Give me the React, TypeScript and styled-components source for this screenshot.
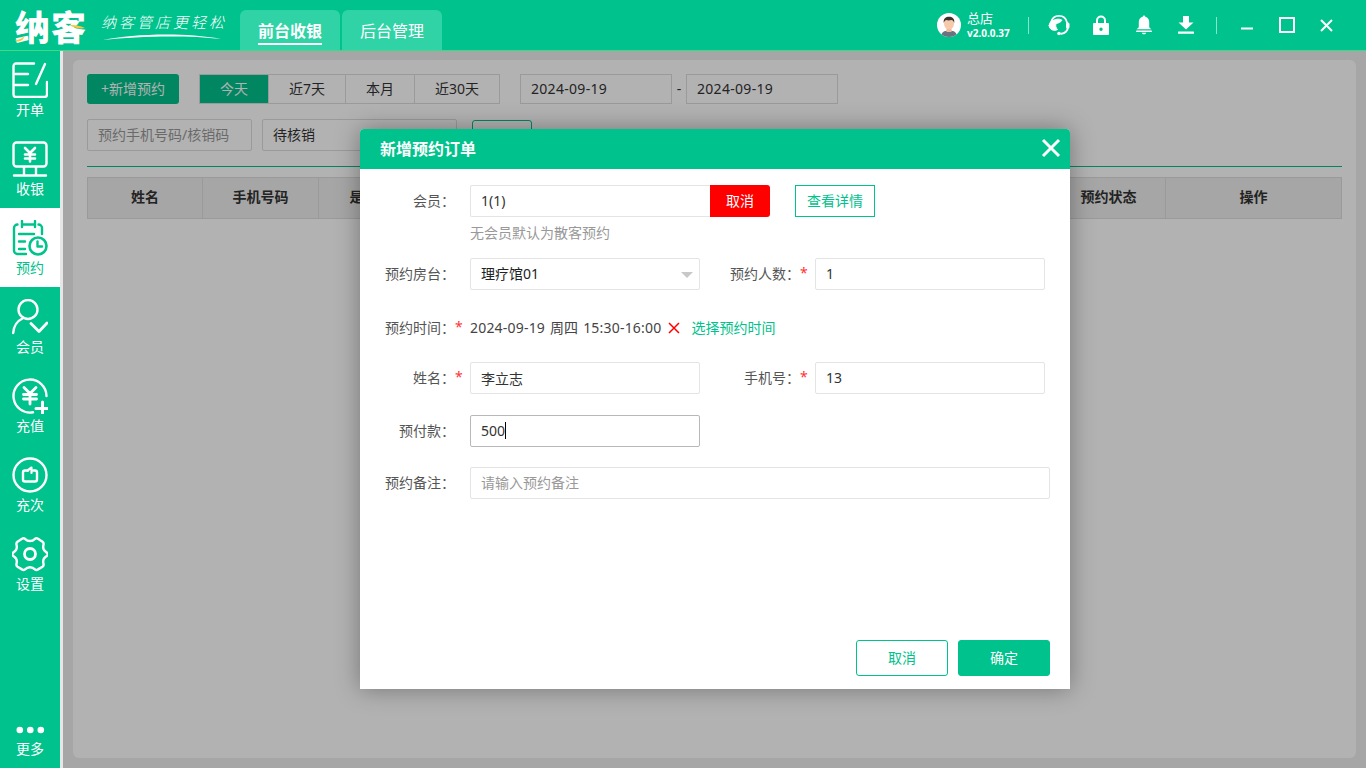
import React from "react";
import styled, { createGlobalStyle } from "styled-components";

const GREEN = "#00c28c";
const FONT = `"Noto Sans", "Noto Sans CJK SC", sans-serif`;

const Global = createGlobalStyle`
  * { box-sizing: border-box; }
  html, body { margin: 0; padding: 0; width: 1366px; height: 768px; overflow: hidden; background: #eee; font-family: ${FONT}; }
  input { font-family: ${FONT}; }
`;

const Page = styled.div`
  position: relative;
  width: 1366px;
  height: 768px;
  display: flex;
  flex-direction: column;
`;

/* ---------- top bar ---------- */
const TopBar = styled.header`
  height: 51px;
  flex: none;
  display: flex;
  align-items: flex-end;
  background: ${GREEN};
  border-bottom: 1px solid #3fd98a;
  padding-left: 15px;
  position: relative;
`;
const LogoWrap = styled.div`
  width: 225px;
  height: 50px;
  flex: none;
  display: flex;
  align-self: flex-start;
`;
const LogoText = styled.div`
  position: relative;
  width: 74px;
  padding-top: 5px;
  font: 900 35px/42px "Noto Sans CJK SC", sans-serif;
  letter-spacing: 1px;
  color: #fff;
  white-space: nowrap;
`;
const LogoAccent = styled.svg`
  position: absolute;
  left: 0;
  top: 20px;
`;
const Slogan = styled.div`
  position: relative;
  margin-left: 12px;
  padding-top: 12px;
  font: italic 300 15px/20px "Noto Sans CJK SC", sans-serif;
  letter-spacing: 3px;
  color: #fff;
  white-space: nowrap;
`;
const Swoosh = styled.svg`
  position: absolute;
  left: 2px;
  top: 33px;
`;
const TopTabs = styled.nav`
  display: flex;
  gap: 2px;
`;
const TopTab = styled.div<{ $active?: boolean }>`
  width: 100px;
  height: 40px;
  background: #30d3a6;
  border-radius: 6px 6px 0 0;
  display: flex;
  justify-content: center;
  align-items: flex-start;
  padding-top: 9px;
  color: #fff;
  font-size: 16px;
  line-height: 24px;
  font-weight: ${(p) => (p.$active ? 700 : 400)};
  span {
    display: block;
    height: 26px;
    border-bottom: ${(p) => (p.$active ? "2px solid #fff" : "none")};
  }
`;
const TopRight = styled.div`
  margin-left: auto;
  height: 50px;
  align-self: flex-start;
  display: flex;
  align-items: center;
  padding-right: 10px;
`;
const Store = styled.div`
  display: flex;
  flex-direction: column;
  margin-left: 6px;
  color: #fff;
  width: 61px;
  b { font-weight: 400; font-size: 13px; line-height: 16px; }
  small { font-weight: 700; font-size: 10px; line-height: 14px; letter-spacing: 0; }
`;
const VRule = styled.i`
  display: block;
  width: 1px;
  height: 17px;
  background: rgba(255, 255, 255, 0.55);
`;
const IconSlot = styled.div<{ $w: number }>`
  width: ${(p) => p.$w}px;
  display: flex;
  justify-content: center;
  align-items: center;
`;

/* ---------- body ---------- */
const Body = styled.div`
  flex: 1;
  min-height: 0;
  display: flex;
`;
const Side = styled.aside`
  width: 60px;
  flex: none;
  background: ${GREEN};
  display: flex;
  flex-direction: column;
`;
const Strip = styled.div`
  width: 3px;
  flex: none;
  background: #e6e6e6;
`;
const SideItem = styled.div<{ $active?: boolean }>`
  height: 79px;
  flex: none;
  display: flex;
  flex-direction: column;
  align-items: center;
  padding-top: 12px;
  background: ${(p) => (p.$active ? "#fff" : "transparent")};
  color: ${(p) => (p.$active ? GREEN : "#fff")};
  font-size: 14px;
  line-height: 18px;
  svg { display: block; height: 36px; margin-bottom: 3px; }
  &:first-child { height: 78px; padding-top: 11px; }
`;
const SideMore = styled(SideItem)`
  margin-top: auto;
  height: 50px;
  padding-top: 5px;
  svg { height: 14px; margin-bottom: 3px; }
`;
const Main = styled.main`
  flex: 1;
  padding: 9px 10px 10px;
  background: #eee;
`;
const Card = styled.section`
  height: 100%;
  background: #fff;
  border-radius: 6px;
  padding: 14px 14px 0;
`;
const Tools = styled.div`
  display: flex;
  height: 30px;
`;
const AddBtn = styled.div`
  width: 92px;
  height: 30px;
  border-radius: 3px;
  background: ${GREEN};
  color: #fff;
  font-size: 14px;
  line-height: 29px;
  text-align: center;
`;
const Seg = styled.div`
  display: flex;
  margin-left: 20px;
  border: 1px solid #ddd;
  height: 30px;
`;
const SegItem = styled.div<{ $w: number; $active?: boolean }>`
  width: ${(p) => p.$w}px;
  line-height: 28px;
  text-align: center;
  font-size: 14px;
  color: ${(p) => (p.$active ? "#fff" : "#333")};
  background: ${(p) => (p.$active ? GREEN : "#fff")};
  & + & { border-left: 1px solid #ddd; }
`;
const DateBox = styled.div`
  width: 152px;
  height: 30px;
  border: 1px solid #ddd;
  font-size: 14px;
  letter-spacing: 0.3px;
  line-height: 28px;
  color: #333;
  padding-left: 10px;
`;
const DateDash = styled.div`
  width: 14px;
  text-align: center;
  line-height: 30px;
  font-size: 14px;
  color: #333;
`;
const DateGroup = styled.div`
  display: flex;
  margin-left: 20px;
`;
const Filters = styled.div`
  display: flex;
  margin-top: 15px;
  height: 32px;
`;
const FilterBox = styled.div<{ $w: number; $ph?: boolean }>`
  width: ${(p) => p.$w}px;
  height: 32px;
  border: 1px solid #ddd;
  border-radius: 2px;
  padding-left: 10px;
  font-size: 14px;
  line-height: 30px;
  color: ${(p) => (p.$ph ? "#999" : "#333")};
  & + & { margin-left: 10px; }
`;
const SearchBtn = styled.div`
  width: 60px;
  height: 31px;
  margin: 1px 0 0 15px;
  border: 1px solid ${GREEN};
  border-radius: 3px;
`;
const Rule = styled.div`
  height: 1px;
  margin-top: 15px;
  background: ${GREEN};
`;
const TableHead = styled.div`
  margin-top: 10px;
  height: 42px;
  display: grid;
  grid-template-columns: 114px 116px 118px 615px 114px 1fr;
  background: #eee;
  border: 1px solid #ddd;
`;
const Th = styled.div`
  font-size: 14px;
  font-weight: 700;
  line-height: 38px;
  text-align: center;
  color: #333;
  & + & { border-left: 1px solid #ddd; }
`;

/* ---------- modal ---------- */
const Overlay = styled.div`
  position: absolute;
  left: 63px;
  top: 51px;
  right: 0;
  bottom: 0;
  background: rgba(0, 0, 0, 0.3);
  display: flex;
  align-items: center;
  justify-content: center;
`;
const Modal = styled.div`
  width: 710px;
  height: 560px;
  margin-left: 1px;
  margin-top: -2px;
  background: #fff;
  border-radius: 4px 4px 0 0;
  box-shadow: 0 0 24px rgba(0, 0, 0, 0.35);
  display: flex;
  flex-direction: column;
  color: #333;
`;
const ModalHead = styled.div`
  height: 40px;
  flex: none;
  background: ${GREEN};
  border-radius: 4px 4px 0 0;
  padding: 0 9px 1px 20px;
  display: flex;
  align-items: center;
  justify-content: space-between;
  color: #fff;
  font-size: 16px;
  font-weight: 700;
`;
const Form = styled.div`
  flex: 1;
  display: flex;
  flex-direction: column;
  padding-top: 16px;
`;
const Row = styled.div<{ $mt?: number; $h?: number }>`
  display: flex;
  align-items: center;
  height: ${(p) => p.$h ?? 32}px;
  margin-top: ${(p) => p.$mt ?? 0}px;
  font-size: 14px;
`;
const Label = styled.label<{ $w?: number }>`
  flex: none;
  width: ${(p) => p.$w ?? 95}px;
  padding-bottom: 2px;
  text-align: right;
  font-size: 14px;
  color: #555;
  white-space: nowrap;
`;
const Star = styled.span`
  flex: none;
  width: 15px;
  color: #f33;
  font-size: 14px;
  padding-bottom: 2px;
`;
const Input = styled.input<{ $w?: number }>`
  flex: none;
  width: ${(p) => p.$w ?? 230}px;
  height: 32px;
  border: 1px solid #e4e4e4;
  border-radius: 2px;
  padding: 0 10px;
  font-size: 14px;
  color: #333;
  outline: none;
  background: #fff;
  &::placeholder { color: #999; font-size: 14px; }
`;
const MemberInput = styled(Input)`
  border-right: 0;
  border-radius: 2px 0 0 2px;
`;
const RedBtn = styled.div`
  width: 60px;
  height: 32px;
  background: #f00;
  color: #fff;
  border-radius: 0 3px 3px 0;
  text-align: center;
  font-size: 14px;
  line-height: 31px;
`;
const OutlineBtn = styled.div`
  width: 80px;
  height: 32px;
  margin-left: 25px;
  border: 1px solid ${GREEN};
  color: ${GREEN};
  text-align: center;
  font-size: 14px;
  line-height: 30px;
`;
const Hint = styled.div`
  margin: 7px 0 0 110px;
  font-size: 14px;
  line-height: 18px;
  color: #999;
`;
const SelectBox = styled.div`
  position: relative;
  flex: none;
  width: 230px;
  height: 32px;
  border: 1px solid #e4e4e4;
  border-radius: 2px;
  padding-left: 10px;
  font-size: 14px;
  line-height: 30px;
  color: #222;
  &::after {
    content: "";
    position: absolute;
    right: 6px;
    top: 13px;
    border: 6px solid transparent;
    border-top: 6px solid #c8c8c8;
    border-bottom: 0;
  }
`;
const TimeText = styled.span`
  font-size: 14px;
  letter-spacing: 0.2px;
  word-spacing: 1px;
  color: #444;
  white-space: nowrap;
  padding-bottom: 2px;
`;
const Clear = styled.svg`
  margin: 0 11px 0 7px;
  flex: none;
`;
const TimeLink = styled.span`
  color: ${GREEN};
  font-size: 14px;
  padding-bottom: 2px;
`;
const FocusBox = styled.div`
  flex: none;
  width: 230px;
  height: 32px;
  border: 1px solid #b8b8b8;
  border-radius: 2px;
  padding-left: 10px;
  font-size: 14px;
  line-height: 30px;
  color: #333;
  display: flex;
  align-items: center;
`;
const Caret = styled.i`
  display: block;
  width: 1px;
  height: 17px;
  background: #000;
`;
const Footer = styled.div`
  margin-top: auto;
  padding: 0 20px 13px 0;
  display: flex;
  justify-content: flex-end;
  gap: 10px;
`;
const FootBtn = styled.div<{ $primary?: boolean }>`
  width: 92px;
  height: 36px;
  border: 1px solid ${GREEN};
  border-radius: 3px;
  background: ${(p) => (p.$primary ? GREEN : "#fff")};
  color: ${(p) => (p.$primary ? "#fff" : GREEN)};
  font-size: 14px;
  line-height: 34px;
  text-align: center;
`;

/* ---------- icons ---------- */
type S = React.SVGProps<SVGSVGElement>;
const base = { fill: "none", stroke: "currentColor", strokeWidth: 2.4, strokeLinecap: "round", strokeLinejoin: "round" } as const;

const IcOpen = (p: S) => (
  <svg width="36" height="36" viewBox="0 0 36 36" {...base} {...p}>
    <path d="M22 1.500H4A2.500 2.500 0 0 0 1.500 4v28.500A2.500 2.500 0 0 0 4 35h28.500a2.500 2.500 0 0 0 2.500-2.500V20" />
    <path d="M3 12h13M3 23h13" />
    <path d="M33 2 24 22" />
  </svg>
);
const IcCash = (p: S) => (
  <svg width="36" height="36" viewBox="0 0 36 36" {...base} {...p}>
    <rect x="1.500" y="1.500" width="33" height="24" rx="3" />
    <path d="M13 7l5 5 5-5M18 12v8.500M13 13.500h10M13 17.500h10" strokeWidth="2.600" />
    <path d="M12 26v8M24 26v8M2 34.500h32" />
  </svg>
);
const IcBook = (p: S) => (
  <svg width="36" height="36" viewBox="0 0 36 36" {...base} {...p}>
    <path d="M14 34H5.500A3.500 3.500 0 0 1 2 30.500V8a3.500 3.500 0 0 1 3.500-3.500M30 14V8a3.500 3.500 0 0 0-3.500-3.500M11 4.500h11" />
    <path d="M10 1v6M23 1v6M7 14h15M7 21.500h6M7 29h6" />
    <circle cx="26" cy="26" r="8.500" strokeWidth="2.600" />
    <path d="M25.500 21.500V26.500H30" />
  </svg>
);
const IcMember = (p: S) => (
  <svg width="36" height="36" viewBox="0 0 36 36" {...base} {...p}>
    <circle cx="16" cy="10.500" r="9.500" />
    <path d="M1.200 34c.5-7 4.300-12.200 9.300-14.500" />
    <path d="M19 24.500l8 8 8-8.500" strokeWidth="2.800" />
  </svg>
);
const IcRecharge = (p: S) => (
  <svg width="36" height="36" viewBox="0 0 36 36" {...base} {...p}>
    <path d="M21 34.300A16.500 16.500 0 1 1 34.500 18" />
    <path d="M12 9.500l6 6 6-6M18 15.500V26M11.500 16.500h13M11.500 21h13" strokeWidth="2.800" />
    <path d="M24 30.500h12.500M30.500 24v12.500" strokeWidth="3" />
  </svg>
);
const IcTimes = (p: S) => (
  <svg width="36" height="36" viewBox="0 0 36 36" {...base} {...p}>
    <circle cx="18" cy="18" r="16.500" />
    <path d="M16 13.500h-3a2 2 0 0 0-2 2v7a2 2 0 0 0 2 2h10a2 2 0 0 0 2-2v-7a2 2 0 0 0-2-2h-2" />
    <path d="M19.500 16V10.500L15.500 13.500" strokeWidth="2.200" />
  </svg>
);
const IcGear = (p: S) => (
  <svg width="36" height="36" viewBox="0 0 36 36" {...base} {...p}>
    <path d="M13 2.800c1.500 1.500 3 2.200 5 2.200s3.500-.7 5-2.200c1-.7 2-.7 3 0l4.500 3c1 .7 1.300 1.700 1 3-.5 2-.5 3.700.5 5.200s2.300 2 3.200 3c.7 1 .7 1.500 0 2.500-.9 1-2.200 1.500-3.200 3s-1 3.200-.5 5.200c.3 1.300 0 2.300-1 3l-4.500 2.700c-1 .7-2 .7-3 0-1.500-1.500-3-2.200-5-2.200s-3.500.7-5 2.200c-1 .7-2 .7-3 0l-4.500-2.700c-1-.7-1.300-1.700-1-3 .5-2 .5-3.700-.5-5.200s-2.300-2-3.200-3c-.7-1-.7-1.500 0-2.500.9-1 2.200-1.500 3.200-3s1-3.200.5-5.200c-.3-1.300 0-2.300 1-3l4.500-3c1-.7 2-.7 3 0z" />
    <circle cx="18" cy="18" r="5.500" strokeWidth="2.800" />
  </svg>
);
const IcMore = (p: S) => (
  <svg width="30" height="14" viewBox="0 0 30 14" fill="currentColor" {...p}>
    <circle cx="4.800" cy="7" r="3.300" /><circle cx="15.300" cy="7" r="3.300" /><circle cx="25.800" cy="7" r="3.300" />
  </svg>
);

const Avatar = () => (
  <svg width="24" height="24" viewBox="0 0 24 24">
    <defs><clipPath id="av"><circle cx="12" cy="12" r="12" /></clipPath></defs>
    <circle cx="12" cy="12" r="12" fill="#fff" />
    <g clipPath="url(#av)">
      <path d="M4 24c0-4.500 3-6.500 8-6.500s8 2 8 6.500z" fill="#6b7280" />
      <rect x="9.500" y="14" width="5" height="5" fill="#eeb99a" />
      <ellipse cx="12" cy="10.500" rx="5" ry="6" fill="#f5c9a9" />
      <path d="M6.800 10C6 5.500 9 3.800 12 3.800s6 1.700 5.200 6.200c-.6-2-1.500-2.700-2.700-2.900-2 .4-4 .4-5 0-1.200.2-2.100.9-2.700 2.900z" fill="#3a3330" />
    </g>
  </svg>
);
const IcService = () => (
  <svg width="22" height="22" viewBox="0 0 22 22" fill="none" stroke="#fff" strokeLinecap="round">
    <path d="M3 8.500C4 4 7 1.800 11 1.800s7 2.200 8 6.700" strokeWidth="1.800" />
    <path d="M1.200 11.500C1.200 8.800 3 7 5 6.500 8 5 11.500 4.500 14 6.200c-.8 1.800-3.800 3-6 3.300-.6 2-.3 4.500 1.500 6-3 2-8.300.5-8.300-4z" fill="#fff" strokeWidth="1" />
    <path d="M19.800 10.500v3c0 3.500-3 6-6.500 6.200" strokeWidth="2" />
    <rect x="18" y="8.500" width="3.500" height="6" rx="1.500" fill="#fff" stroke="none" />
    <circle cx="11" cy="19.500" r="1.800" fill="#fff" stroke="none" />
  </svg>
);
const IcLock = () => (
  <svg width="16" height="20" viewBox="0 0 16 20">
    <path d="M4 9V5.500a4 4 0 0 1 8 0V9" fill="none" stroke="#fff" strokeWidth="2" />
    <path fillRule="evenodd" fill="#fff" d="M1 8h14a1 1 0 0 1 1 1v10a1 1 0 0 1-1 1H1a1 1 0 0 1-1-1V9a1 1 0 0 1 1-1zm7 4.500a1.700 1.700 0 1 0 0 3.400 1.700 1.700 0 0 0 0-3.400z" />
  </svg>
);
const IcBell = () => (
  <svg width="16" height="20" viewBox="0 0 16 20" fill="#fff">
    <path d="M8 0.500c.8 0 1.300.6 1.300 1.300 2.600.6 3.900 2.800 3.900 5.500v4.200c0 1 .8 1.800 2.300 2.800H.5c1.500-1 2.300-1.800 2.300-2.800V7.300c0-2.700 1.300-4.900 3.900-5.500C6.700 1.100 7.200.5 8 .5z" />
    <rect x="0" y="15.500" width="16" height="1.400" rx=".7" />
    <path d="M5.800 17.700h4.400c-.4 1.100-1.200 1.600-2.200 1.600s-1.800-.5-2.200-1.600z" />
  </svg>
);
const IcDown = () => (
  <svg width="16" height="18" viewBox="0 0 16 18" fill="#fff">
    <path d="M5 0h6v6.500h4.500L8 13.500.5 6.500H5z" />
    <rect x="0" y="15.500" width="16" height="2.200" rx=".5" />
  </svg>
);
const IcMin = () => (
  <svg width="12" height="12" viewBox="0 0 12 12"><path d="M0 9.500h12" stroke="#fff" strokeWidth="2" /></svg>
);
const IcMax = () => (
  <svg width="16" height="16" viewBox="0 0 16 16"><rect x="1" y="1" width="14" height="14" fill="none" stroke="#fff" strokeWidth="2" /></svg>
);
const IcX = () => (
  <svg width="13" height="13" viewBox="0 0 13 13"><path d="M1 1l11 11M12 1L1 12" stroke="#fff" strokeWidth="2" /></svg>
);
const IcModalX = () => (
  <svg width="20" height="20" viewBox="0 0 20 20"><path d="M2 2l16 16M18 2L2 18" stroke="#fff" strokeWidth="3" /></svg>
);

const sideItems: [string, (p: S) => React.ReactElement, boolean][] = [
  ["开单", IcOpen, false],
  ["收银", IcCash, false],
  ["预约", IcBook, true],
  ["会员", IcMember, false],
  ["充值", IcRecharge, false],
  ["充次", IcTimes, false],
  ["设置", IcGear, false],
];

export default function App() {
  return (
    <Page>
      <Global />
      <TopBar>
        <LogoWrap>
          <LogoText>
            纳客
            <LogoAccent width="72" height="22" viewBox="0 0 72 22" fill="#f6c945">
              <path d="M0 20c4 0 7-1.500 9-4 0 3-2 5.500-7 5.500z" />
              <path d="M54 5c5 0 11 .5 16 3-4 1-11 0-16-3z" />
            </LogoAccent>
          </LogoText>
          <Slogan>
            纳客管店更轻松
            <Swoosh width="120" height="8" viewBox="0 0 120 8">
              <path d="M0 7C30 1 80-1 118 6 85 2 35 3 0 7z" fill="#fff" />
            </Swoosh>
          </Slogan>
        </LogoWrap>
        <TopTabs>
          <TopTab $active><span>前台收银</span></TopTab>
          <TopTab><span>后台管理</span></TopTab>
        </TopTabs>
        <TopRight>
          <Avatar />
          <Store><b>总店</b><small>v2.0.0.37</small></Store>
          <VRule />
          <IconSlot $w={60}><IcService /></IconSlot>
          <IconSlot $w={24}><IcLock /></IconSlot>
          <IconSlot $w={61}><IcBell /></IconSlot>
          <IconSlot $w={23}><IcDown /></IconSlot>
          <IconSlot $w={19}> </IconSlot>
          <VRule />
          <IconSlot $w={59}><IcMin /></IconSlot>
          <IconSlot $w={21}><IcMax /></IconSlot>
          <IconSlot $w={59}><IcX /></IconSlot>
        </TopRight>
      </TopBar>
      <Body>
        <Side>
          {sideItems.map(([name, Icon, active]) => (
            <SideItem key={name} $active={active}>
              <Icon />
              {name}
            </SideItem>
          ))}
          <SideMore><IcMore />更多</SideMore>
        </Side>
        <Strip />
        <Main>
          <Card>
            <Tools>
              <AddBtn>+新增预约</AddBtn>
              <Seg>
                <SegItem $w={68} $active>今天</SegItem>
                <SegItem $w={77}>近7天</SegItem>
                <SegItem $w={69}>本月</SegItem>
                <SegItem $w={85}>近30天</SegItem>
              </Seg>
              <DateGroup>
                <DateBox>2024-09-19</DateBox>
                <DateDash>-</DateDash>
                <DateBox>2024-09-19</DateBox>
              </DateGroup>
            </Tools>
            <Filters>
              <FilterBox $w={165} $ph>预约手机号码/核销码</FilterBox>
              <FilterBox $w={195}>待核销</FilterBox>
              <SearchBtn />
            </Filters>
            <Rule />
            <TableHead>
              <Th>姓名</Th>
              <Th>手机号码</Th>
              <Th>是否到店</Th>
              <Th />
              <Th>预约状态</Th>
              <Th>操作</Th>
            </TableHead>
          </Card>
        </Main>
      </Body>
      <Overlay>
        <Modal>
          <ModalHead>
            新增预约订单
            <IcModalX />
          </ModalHead>
          <Form>
            <Row>
              <Label>会员：</Label>
              <Star />
              <MemberInput $w={240} readOnly value="1(1)" />
              <RedBtn>取消</RedBtn>
              <OutlineBtn>查看详情</OutlineBtn>
            </Row>
            <Hint>无会员默认为散客预约</Hint>
            <Row $mt={16}>
              <Label>预约房台：</Label>
              <Star />
              <SelectBox>理疗馆01</SelectBox>
              <Label $w={100}>预约人数：</Label>
              <Star>*</Star>
              <Input readOnly value="1" />
            </Row>
            <Row $mt={22} $h={32}>
              <Label>预约时间：</Label>
              <Star>*</Star>
              <TimeText>2024-09-19 周四 15:30-16:00</TimeText>
              <Clear width="12" height="12" viewBox="0 0 12 12"><path d="M1 1l10 10M11 1L1 11" stroke="#f00" strokeWidth="1.500" /></Clear>
              <TimeLink>选择预约时间</TimeLink>
            </Row>
            <Row $mt={18}>
              <Label>姓名：</Label>
              <Star>*</Star>
              <Input readOnly value="李立志" />
              <Label $w={100}>手机号：</Label>
              <Star>*</Star>
              <Input readOnly value="13" />
            </Row>
            <Row $mt={21}>
              <Label>预付款：</Label>
              <Star />
              <FocusBox>500<Caret /></FocusBox>
            </Row>
            <Row $mt={20}>
              <Label>预约备注：</Label>
              <Star />
              <Input $w={580} readOnly placeholder="请输入预约备注" />
            </Row>
            <Footer>
              <FootBtn>取消</FootBtn>
              <FootBtn $primary>确定</FootBtn>
            </Footer>
          </Form>
        </Modal>
      </Overlay>
    </Page>
  );
}
